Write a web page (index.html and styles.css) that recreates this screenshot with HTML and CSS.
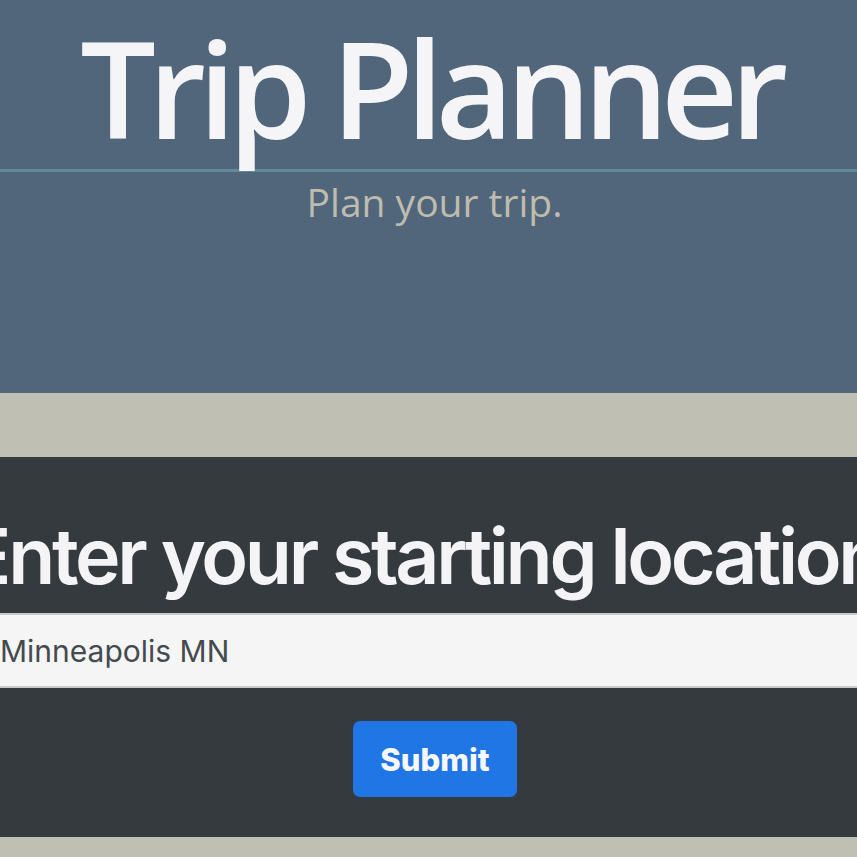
FILE: index.html
```html
<!DOCTYPE html>
<html lang="en">
<head>
<meta charset="utf-8">
<title>Trip Planner</title>
<link rel="stylesheet" href="styles.css">
</head>
<body>
<header class="hero">
  <h1 class="hero-title">Trip Planner</h1>
  <p class="hero-sub">Plan your trip.</p>
</header>
<section class="start">
  <div class="start-inner">
    <h2 class="start-title">Enter your starting location</h2>
    <input class="start-input" type="text" value="Minneapolis MN">
    <button class="start-btn" type="button">Submit</button>
  </div>
</section>
</body>
</html>
```

FILE: styles.css
```css
html, body {
  margin: 0;
  padding: 0;
}
body {
  background: #bfbfb4;
  overflow: hidden;
  font-family: "Open Sans", "Noto Sans", sans-serif;
}
.hero {
  background: #51667a;
  padding: 5px 0 168px;
  text-align: center;
}
.hero-title {
  margin: 0;
  font-family: "Open Sans", sans-serif;
  font-weight: 600;
  font-size: 134px;
  line-height: 164px;
  letter-spacing: -7.6px;
  color: #f5f5f7;
  border-bottom: 3px solid #5e8b96;
  padding-left: 4px;
}
.hero-sub {
  margin: 7px 0 0;
  font-size: 39px;
  line-height: 46px;
  color: #bdbcaf;
  padding-left: 12px;
}
.start {
  margin-top: 64px;
  background: #353a3e;
  padding: 53px 0 40px;
  overflow: hidden;
}
.start-inner {
  display: flex;
  flex-direction: column;
  align-items: center;
  margin: 0 -22px;
}
.start-title {
  margin: 0 0 11px -10px;
  font-family: "Inter", "Liberation Sans", sans-serif;
  font-weight: 600;
  font-size: 77px;
  line-height: 1.2;
  letter-spacing: -3.3px;
  color: #f4f4f6;
  white-space: nowrap;
}
.start-input {
  align-self: stretch;
  box-sizing: border-box;
  height: 75px;
  margin: 0;
  padding: 0 0 0 22px;
  border: 0;
  border-top: 2px solid #c9c9c9;
  border-bottom: 2px solid #c9c9c9;
  background: #f5f5f5;
  font-family: "Inter", "Liberation Sans", sans-serif;
  font-size: 30px;
  color: #454a50;
  outline: none;
}
.start-btn {
  margin: 33px 0 0 13px;
  width: 164px;
  height: 76px;
  border: 0;
  border-radius: 7px;
  background: #2176e6;
  color: #f8f8fc;
  font-family: "Inter", "Liberation Sans", sans-serif;
  font-weight: 800;
  font-size: 31px;
  cursor: pointer;
}
```
